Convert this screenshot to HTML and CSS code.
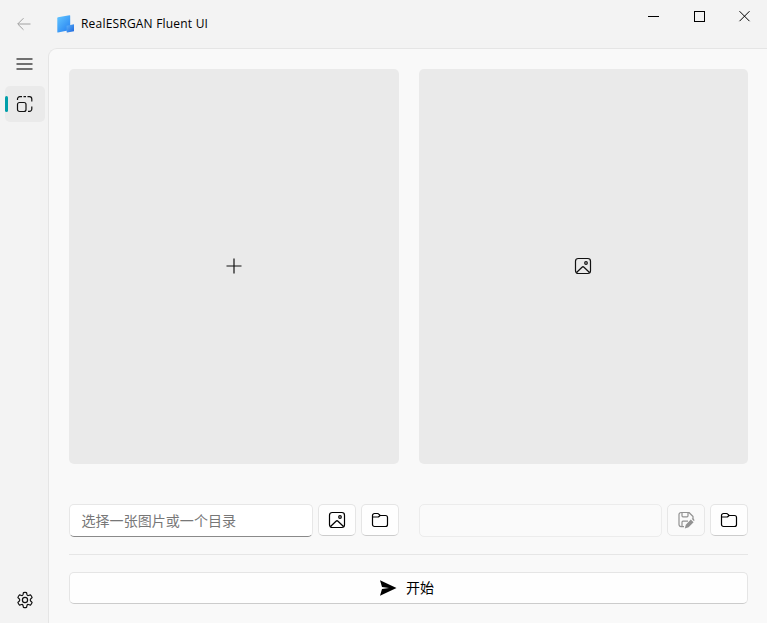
FILE: index.html
```html
<!DOCTYPE html>
<html lang="zh-CN">
<head>
<meta charset="utf-8">
<title>RealESRGAN Fluent UI</title>
<link rel="stylesheet" href="styles.css">
</head>
<body>
<svg width="0" height="0" class="defs">
  <defs>
    <symbol id="image" viewBox="0 0 18 18"><rect x="1.5" y="1.5" width="15" height="15" rx="2.7"/><path d="M2.5 15.5L8 10.2Q9 9.3 10 10.2L15.5 15.5"/><circle cx="12" cy="6" r="1.3"/></symbol>
    <symbol id="folder" viewBox="0 0 18 18"><path d="M1.5 4.5a2 2 0 0 1 2-2h3q.8 0 1.300.6L9.100 4.500h5.400a2 2 0 0 1 2 2v7a2 2 0 0 1-2 2h-11a2 2 0 0 1-2-2zM1.500 6h5.300q.7 0 1.200-.5l1.100-1"/></symbol>
  </defs>
</svg>
<div class="window">
  <header class="titlebar">
    <div class="back"><svg width="16" height="16" viewBox="0 0 16 16"><path d="M14.500 8H2M7.500 2.200L1.700 8l5.800 5.800"/></svg></div>
    <svg class="logo" width="18" height="18" viewBox="0 0 18 18">
      <defs>
        <linearGradient id="big" x1="0" y1="0" x2=".8" y2="1"><stop stop-color="#63c7ff"/><stop offset="1" stop-color="#2883f2"/></linearGradient>
        <linearGradient id="small" x1="0" y1="0" x2="1" y2="1"><stop stop-color="#5fb5fb"/><stop offset="1" stop-color="#1b64dc"/></linearGradient>
      </defs>
      <path fill="url(#big)" d="M.3 3.200Q.3 2.500 1 2.300L12.400.2q.8-.1.8.6v14.100L1 17.600q-.7.1-.7-.6z"/>
      <path fill="url(#small)" d="M9.600 10.700L17 9.200v7L10.300 17.600q-.7.1-.7-.6z"/>
    </svg>
    <span class="title">RealESRGAN Fluent UI</span>
    <div class="controls">
      <svg width="46" height="32"><path d="M18 16.500h11"/></svg>
      <svg width="46" height="32"><rect x="18.500" y="11.500" width="10" height="10"/></svg>
      <svg width="46" height="32"><path d="M17.500 11.200l10 10M27.500 11.200l-10 10"/></svg>
    </div>
  </header>
  <nav class="rail">
    <div class="item menu"><svg width="18" height="18" viewBox="0 0 18 18"><path d="M1.500 4h16M1.500 9h16M1.500 14h16"/></svg></div>
    <div class="item active"><svg width="18" height="18" viewBox="0 0 18 18"><rect x="2.500" y="7.500" width="8.500" height="9" rx="2"/><path d="M2.500 5V4a2.300 2.300 0 0 1 2.300-2.300H7M12.500 1.700h2A2.300 2.300 0 0 1 16.800 4v2.500M8.500 1.700h2.500M16.800 11.500V14a2.300 2.300 0 0 1-2.300 2.300H13"/></svg></div>
    <div class="item settings"><svg width="18" height="18" viewBox="0 0 18 18"><path d="M7.450 1.600Q9 1.150 10.550 1.600L11 3.700Q11.300 4.700 12.400 4.500L14.500 3.900Q15.700 5.050 16.100 6.600L14.600 8Q13.800 9 14.600 10L16.100 11.400Q15.700 12.950 14.500 14.100L12.400 13.500Q11.300 13.300 11 14.300L10.550 16.400Q9 16.850 7.450 16.400L7 14.300Q6.700 13.300 5.600 13.500L3.500 14.100Q2.300 12.950 1.900 11.400L3.400 10Q4.200 9 3.400 8L1.900 6.600Q2.300 5.050 3.500 3.900L5.600 4.500Q6.700 4.700 7 3.700Z"/><circle cx="9" cy="9" r="2.600"/></svg></div>
  </nav>
  <main class="content">
    <div class="previews">
      <div class="preview"><svg width="18" height="18" viewBox="0 0 18 18"><path d="M9 1.500v15M1.500 9h15"/></svg></div>
      <div class="preview"><svg width="18" height="18"><use href="#image"/></svg></div>
    </div>
    <div class="paths">
      <div class="path">
        <div class="field">选择一张图片或一个目录</div>
        <button class="btn"><svg width="18" height="18"><use href="#image"/></svg></button>
        <button class="btn"><svg width="18" height="18"><use href="#folder"/></svg></button>
      </div>
      <div class="path">
        <div class="field disabled"></div>
        <button class="btn disabled"><svg width="18" height="18" viewBox="0 0 18 18"><path d="M7 15.600H4a2 2 0 0 1-2-2V3.500a2 2 0 0 1 2-2h8l4 4V8M5 1.500v3.300q0 1 1 1h4q1 0 1-1V1.500M5 15.500v-4.300q0-1 1-1h5"/><path class="solid" d="M13.800 8.500l2.800 2.800-5 5-3.800 1.300 1-3.800zM14.700 7.800q1.200-.8 2.200.2t.2 2.200z"/></svg></button>
        <button class="btn"><svg width="18" height="18"><use href="#folder"/></svg></button>
      </div>
    </div>
    <div class="divider"></div>
    <button class="btn start"><svg width="18" height="18" viewBox="0 0 18 18"><path class="solid" d="M1 1.300L17.500 9 1 16.700 3 10l7-1-7-1z"/></svg><span>开始</span></button>
  </main>
</div>
</body>
</html>
```
FILE: styles.css
```css
* { box-sizing: border-box; }
body { margin: 0; font-family: "Open Sans", "Noto Sans CJK SC", sans-serif; }
.defs { position: absolute; }
svg { display: block; fill: none; stroke: currentColor; stroke-width: 1.2; stroke-linejoin: round; }
.window {
  display: grid;
  grid-template: 48px 1fr / 48px 1fr;
  width: 767px;
  height: 623px;
  overflow: hidden;
  background: #f3f3f3;
  color: #111;
}
.titlebar { grid-column: 1 / 3; display: flex; align-items: flex-start; }
.back { width: 57px; padding: 16px 0 0 16px; color: #a0a0a0; }
.back svg { stroke-width: 1; }
.logo { margin-top: 15px; stroke: none; }
.title { margin: 15px 0 0 6px; font-size: 12px; line-height: 18px; letter-spacing: .2px; color: #000; white-space: nowrap; }
.controls { display: flex; margin-left: auto; margin-right: -1px; color: #000; }
.controls svg { stroke-width: 1; stroke-linejoin: miter; }
.rail { display: flex; flex-direction: column; align-items: flex-start; padding-left: 5px; }
.item { display: flex; align-items: center; width: 40px; height: 36px; padding-left: 10px; border-radius: 5px; }
.menu { margin-top: -2px; color: #707070; }
.menu svg { stroke-width: 1.8; }
.active { position: relative; margin-top: 4px; background: #eaeaea; }
.active::before { content: ""; position: absolute; left: 0; top: 10px; width: 3px; height: 16px; border-radius: 1.5px; background: #009faa; }
.settings { margin-top: auto; margin-bottom: 5px; padding-left: 10.5px; }
.content {
  display: flex;
  flex-direction: column;
  padding: 20px 19px 19px 20px;
  border: solid #e5e5e5;
  border-width: 1px 0 0 1px;
  border-top-left-radius: 9px;
  background: #f9f9f9;
}
.previews, .paths { display: grid; grid-template-columns: 1fr 1fr; gap: 20px; }
.preview { display: grid; place-items: center; height: 395px; padding-bottom: 1px; border-radius: 5px; background: #eaeaea; }
.paths { margin-top: 40px; }
.path { display: flex; align-items: flex-start; gap: 5px; }
.field {
  flex: 1;
  height: 33px;
  padding: 0 11.5px;
  border: 1px solid #e7e7e7;
  border-bottom-color: #8a8a8a;
  border-radius: 5px;
  background: #fff;
  font-size: 14px;
  line-height: 32px;
  letter-spacing: .05px;
  color: #777;
  white-space: nowrap;
}
.field.disabled { background: #fafafa; border-color: #ececec; }
.btn {
  display: flex;
  align-items: center;
  justify-content: center;
  width: 38px;
  height: 32px;
  padding: 0;
  border: 1px solid #e5e5e5;
  border-bottom-color: #ccc;
  border-radius: 5px;
  background: #fefefe;
  color: #000;
  font: 14px "Noto Sans CJK SC", sans-serif;
}
.btn.disabled { background: #fafafa; border-color: #e7e7e7; color: #929292; }
.solid { fill: currentColor; stroke: none; }
.divider { height: 1px; margin: 17px 0; background: #e6e6e6; }
.start { width: 100%; gap: 9px; padding-right: 4px; }
.start span { margin-top: -2px; }
```
